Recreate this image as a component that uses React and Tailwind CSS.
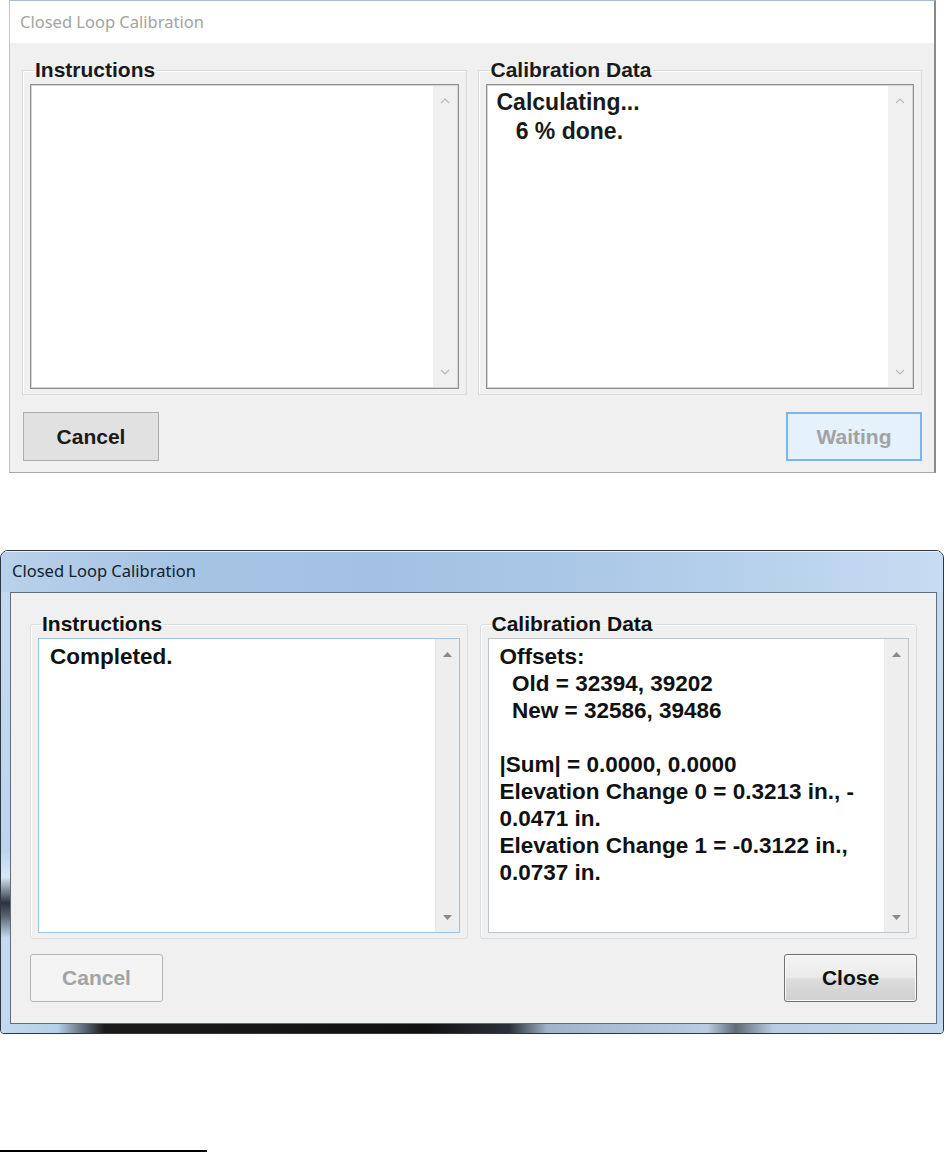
import React from "react";

const SANS = { fontFamily: '"Liberation Sans", Arial, sans-serif' };
const UI = { fontFamily: '"Noto Sans", "Open Sans", sans-serif' };

function ChevronUp() {
  return (
    <svg width="10" height="6" viewBox="0 0 10 6">
      <polyline points="1,5 5,1 9,5" fill="none" stroke="#b8b8b8" strokeWidth="1.2" />
    </svg>
  );
}
function ChevronDown() {
  return (
    <svg width="10" height="6" viewBox="0 0 10 6">
      <polyline points="1,1 5,5 9,1" fill="none" stroke="#b8b8b8" strokeWidth="1.2" />
    </svg>
  );
}
function TriUp() {
  return (
    <svg width="9" height="5" viewBox="0 0 9 5">
      <polygon points="0,5 4.5,0 9,5" fill="#8a8a8a" />
    </svg>
  );
}
function TriDown() {
  return (
    <svg width="9" height="5" viewBox="0 0 9 5">
      <polygon points="0,0 4.5,5 9,0" fill="#8a8a8a" />
    </svg>
  );
}

function TopBox({ label, lines }) {
  return (
    <fieldset className="flex-1 border border-[#dadada] px-[7px] pb-[5px] shadow-[inset_1px_1px_0_#ffffff]">
      <legend
        className="ml-[4px] px-[1px] text-[21px] font-bold leading-[24px] text-[#1a1a1a]"
        style={SANS}
      >
        {label}
      </legend>
      <div className="mt-[2px] flex h-[305px] border border-[#8e8e8e] bg-white shadow-[inset_0_0_0_1px_#d6d6d6]">
        <div
          className="flex-1 pl-[10px] pt-[3px] text-[23px] font-bold leading-[29px] text-[#1a1a1a] whitespace-pre"
          style={SANS}
        >
          {lines.map((l, i) => (
            <div key={i}>{l}</div>
          ))}
        </div>
        <div className="my-[1px] mr-[1px] flex w-[24px] flex-col items-center justify-between bg-[#f0f0f0] py-[12px]">
          <ChevronUp />
          <ChevronDown />
        </div>
      </div>
    </fieldset>
  );
}

function BottomBox({ label, lines, focused }) {
  return (
    <fieldset className="flex-1 rounded-[3px] border border-[#d5dfe5] px-[7px] pb-[5px] shadow-[inset_1px_1px_0_#ffffff]">
      <legend
        className="ml-[3px] px-[1px] text-[21px] font-bold leading-[24px] text-[#111]"
        style={SANS}
      >
        {label}
      </legend>
      <div
        className={
          "mt-[2px] flex h-[295px] border bg-white " +
          (focused ? "border-[#9cc3e6]" : "border-[#bfc4ca]")
        }
      >
        <div
          className="flex-1 pl-[11px] pt-[4px] text-[22.5px] font-bold leading-[27px] text-[#111] whitespace-pre"
          style={SANS}
        >
          {lines.map((l, i) => (
            <div key={i}>{l === "" ? "\u00a0" : l}</div>
          ))}
        </div>
        <div className="flex w-[24px] flex-col items-center justify-between border-l border-[#e8e8e8] bg-[#eeeeee] pb-[12px] pt-[13px]">
          <TriUp />
          <TriDown />
        </div>
      </div>
    </fieldset>
  );
}

export default function App() {
  return (
    <div className="flex h-[1154px] w-[946px] flex-col overflow-hidden bg-white">
      {/* Top dialog (Windows 10 style) */}
      <div className="ml-[9px] flex h-[473px] w-[927px] flex-col border-b border-l border-r-2 border-t border-b-[#a8a8a8] border-l-[#c4c4c4] border-r-[#8a8a8a] border-t-[#a9bdd3]">
        <div className="flex h-[42px] items-center bg-white pl-[10px] pt-[1px]">
          <span className="text-[16.5px] text-[#a3a3a3]" style={UI}>
            Closed Loop Calibration
          </span>
        </div>
        <div className="flex flex-1 flex-col bg-[#f0f0f0] px-[12px] pt-[15px]">
          <div className="flex gap-[11px]">
            <TopBox label="Instructions" lines={[]} />
            <TopBox label="Calibration Data" lines={["Calculating...", "   6 % done."]} />
          </div>
          <div className="mt-[17px] flex justify-between pl-[1px]">
            <div
              className="flex h-[49px] w-[136px] items-center justify-center border border-[#adadad] bg-[#e1e1e1] text-[21px] font-bold text-[#1a1a1a]"
              style={SANS}
            >
              Cancel
            </div>
            <div
              className="flex h-[49px] w-[136px] items-center justify-center border-2 border-[#7cb6ec] bg-[#e5f1fb] text-[21px] font-bold text-[#a2a2a2]"
              style={SANS}
            >
              Waiting
            </div>
          </div>
        </div>
      </div>

      {/* Bottom dialog (Windows 7 Aero style) */}
      <div className="mt-[77px] flex h-[484px] w-[944px] flex-col overflow-hidden rounded-b-[4px] rounded-t-[8px] border border-[#2e3640] bg-[#c3d9ef]">
        <div className="flex h-[41px] items-center bg-[linear-gradient(90deg,#b9d1ea_0%,#a6c4e4_18%,#a3c2e3_40%,#a9c7e6_60%,#b7d1ec_80%,#c6dcf2_100%)] pl-[11px] shadow-[inset_0_1px_0_#e6f0fa]">
          <span className="text-[16.5px] text-[#13202e]" style={UI}>
            Closed Loop Calibration
          </span>
        </div>
        <div className="flex h-[432px]">
          <div className="w-[9px] bg-[linear-gradient(180deg,#c3d9ef_0%,#bcd5ef_60%,#d8e8f6_66%,#2a323c_72%,#59636e_75%,#c3d9ef_80%,#c3d9ef_100%)]" />
          <div className="flex flex-1 flex-col border border-[#5f6e7e] bg-[#f0f0f0] px-[19px] pt-[19px]">
            <div className="flex gap-[12px]">
              <BottomBox label="Instructions" lines={["Completed."]} focused />
              <BottomBox
                label="Calibration Data"
                lines={[
                  "Offsets:",
                  "  Old = 32394, 39202",
                  "  New = 32586, 39486",
                  "",
                  "|Sum| = 0.0000, 0.0000",
                  "Elevation Change 0 = 0.3213 in., -",
                  "0.0471 in.",
                  "Elevation Change 1 = -0.3122 in.,",
                  "0.0737 in.",
                ]}
              />
            </div>
            <div className="mt-[15px] flex justify-between">
              <div
                className="flex h-[48px] w-[133px] items-center justify-center rounded-[3px] border border-[#b3b7ba] bg-[#f4f4f4] text-[21px] font-bold text-[#a3a3a3]"
                style={SANS}
              >
                Cancel
              </div>
              <div
                className="flex h-[48px] w-[133px] items-center justify-center rounded-[3px] border border-[#707070] bg-[linear-gradient(180deg,#f3f3f3_0%,#ebebeb_48%,#dddddd_52%,#cfcfcf_100%)] text-[21px] font-bold text-[#111] shadow-[inset_0_0_0_1px_#fbfbfb]"
                style={SANS}
              >
                Close
              </div>
            </div>
          </div>
          <div className="w-[6px] bg-[linear-gradient(180deg,#c3d9ef_0%,#bcd6f0_100%)]" />
        </div>
        <div className="h-[9px] bg-[linear-gradient(90deg,#c3d9ef_0%,#b5d0ec_6%,#1a1a1a_11%,#111_45%,#2c3138_54%,#9fb4c8_58%,#b8cde2_75%,#5f6c78_78%,#b8cde2_82%,#c3d9ef_100%)]" />
      </div>

      <div className="mt-[116px] h-[2px] w-[207px] bg-black" />
    </div>
  );
}
